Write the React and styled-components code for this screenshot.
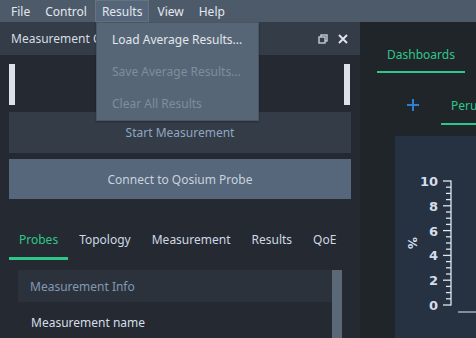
import React from 'react'
import styled, { createGlobalStyle } from 'styled-components'

const Global = createGlobalStyle`
  html, body { margin: 0; padding: 0; background: #202529; }
  body { font-family: "Noto Sans", "Open Sans", sans-serif; font-size: 12px; }
`

const Window = styled.div`
  position: relative;
  width: 476px;
  height: 338px;
  overflow: hidden;
  display: flex;
  flex-direction: column;
  background: #202529;
`

const MenuBar = styled.div`
  height: 22px;
  flex: none;
  display: flex;
  align-items: center;
  padding-left: 4px;
  background: #4d5a69;
`

const MenuItem = styled.div`
  height: 22px;
  box-sizing: border-box;
  padding: 0 6px;
  margin-right: 1px;
  display: flex;
  align-items: center;
  color: #e3e8ee;
  border: 1px solid ${(p) => (p.open ? '#65737f' : 'transparent')};
  background: ${(p) => (p.open ? '#56667a' : 'transparent')};
`

const Main = styled.div`
  flex: 1;
  display: flex;
  min-height: 0;
`

const Dock = styled.div`
  width: 360px;
  flex: none;
  display: flex;
  flex-direction: column;
  background: #252a32;
`

const DockTitle = styled.div`
  height: 33px;
  flex: none;
  display: flex;
  align-items: center;
  padding: 0 12px 0 11px;
  background: #333c47;
  color: #d6dde6;
`

const TitleText = styled.span`
  flex: 1;
`

const TitleButtons = styled.div`
  display: flex;
  align-items: center;
  gap: 10px;
`

const DockBody = styled.div`
  flex: 1;
  display: flex;
  flex-direction: column;
  padding: 9px 9px 0 9px;
`

const EdgeRow = styled.div`
  height: 41px;
  display: flex;
  justify-content: space-between;
  padding-right: 1px;
`

const Edge = styled.div`
  width: 6px;
  background: #dde1e8;
`

const Button = styled.div`
  height: ${(p) => (p.primary ? 40 : 41)}px;
  margin-top: ${(p) => (p.primary ? 6 : 7)}px;
  display: flex;
  align-items: center;
  justify-content: center;
  background: ${(p) => (p.primary ? '#56667b' : '#343d47')};
  color: ${(p) => (p.primary ? '#c9d3de' : '#8fa6c2')};
`

const Tabs = styled.div`
  margin-top: 23px;
  display: flex;
  height: 38px;
`

const Tab = styled.div`
  padding: 0 10px;
  margin-right: 1px;
  display: flex;
  align-items: center;
  color: ${(p) => (p.active ? '#2fc789' : '#cfd8e3')};
  border-bottom: 3px solid ${(p) => (p.active ? '#2fc789' : 'transparent')};
`

const Content = styled.div`
  margin-top: 10px;
  margin-left: 9px;
  display: flex;
  flex: 1;
  width: 324px;
`

const Group = styled.div`
  flex: 1;
`

const GroupHeader = styled.div`
  height: 32px;
  display: flex;
  align-items: center;
  padding-left: 12px;
  background: #2c323c;
  color: #8198b3;
`

const Field = styled.div`
  padding: 12px 0 0 13px;
  color: #d5dde7;
`

const Scroll = styled.div`
  width: 10px;
  background: #5a6878;
`

const Right = styled.div`
  flex: 1;
  display: flex;
  flex-direction: column;
  background: #202529;
`

const TopTabs = styled.div`
  display: flex;
  padding: 15px 0 0 17px;
`

const TopTab = styled.div`
  width: 88px;
  height: 36px;
  box-sizing: border-box;
  display: flex;
  align-items: center;
  justify-content: center;
  color: #2fc789;
  border-bottom: 2px solid #2fc789;
`

const SubTabs = styled.div`
  display: flex;
  align-items: center;
  margin-top: 14px;
  height: 38px;
`

const Plus = styled.div`
  width: 81px;
  box-sizing: border-box;
  padding: 0 0 3px 47px;
  display: flex;
`

const SubTab = styled.div`
  flex: 1;
  height: 38px;
  box-sizing: border-box;
  padding: 0 0 0 10px;
  display: flex;
  align-items: center;
  color: #2fc789;
  border-bottom: 2px solid #2fc789;
  white-space: nowrap;
  overflow: hidden;
`

const ChartArea = styled.div`
  flex: 1;
  margin: 11px 0 0 35px;
  background: #263142;
`

const Dropdown = styled.div`
  position: absolute;
  left: 96px;
  top: 22px;
  width: 163px;
  height: 99px;
  box-sizing: border-box;
  background: #576676;
  border: 1px solid #4a5666;
  box-shadow: 0 1px 2px rgba(0, 0, 0, 0.3);
  display: flex;
  flex-direction: column;
`

const DropItem = styled.div`
  height: 33px;
  display: flex;
  align-items: center;
  padding-left: 15px;
  color: ${(p) => (p.disabled ? '#7f8d9c' : '#e1e7ee')};
`

const FloatIcon = () => (
  <svg width="10" height="10" viewBox="0 0 10 10">
    <rect x="3" y="1" width="6" height="6" fill="none" stroke="#c5ccd5" strokeWidth="1.4" />
    <rect x="1" y="3" width="6" height="6" fill="#333c47" stroke="#c5ccd5" strokeWidth="1.4" />
  </svg>
)

const CloseIcon = () => (
  <svg width="10" height="10" viewBox="0 0 10 10">
    <path d="M1 1 L9 9 M9 1 L1 9" stroke="#dfe4ea" strokeWidth="2" />
  </svg>
)

const PlusIcon = () => (
  <svg width="12" height="12" viewBox="0 0 12 12">
    <path d="M6 0 V12 M0 6 H12" stroke="#2f7fd0" strokeWidth="2" />
  </svg>
)

const Chart = () => {
  const ticks = []
  for (let i = 0; i <= 20; i++) {
    const y = 45 + i * 6.2
    const major = i % 4 === 0
    ticks.push(
      <line key={i} x1={major ? 48 : 51} x2={56} y1={y} y2={y} stroke="#dfe6ef" strokeWidth="1.3" />
    )
  }
  const labels = [10, 8, 6, 4, 2, 0]
  return (
    <svg width="81" height="202" viewBox="0 0 81 202">
      <line x1="56" x2="56" y1="44.5" y2="169.5" stroke="#dfe6ef" strokeWidth="1.3" />
      {ticks}
      {labels.map((v, i) => (
        <text
          key={v}
          x="43"
          y={50 + i * 24.8}
          textAnchor="end"
          fill="#d3deea"
          fontSize="13"
          fontWeight="bold"
          fontFamily="DejaVu Sans, sans-serif"
        >
          {v}
        </text>
      ))}
      <text
        x="0"
        y="0"
        transform="translate(13 107) rotate(90)"
        textAnchor="middle"
        fill="#d3deea"
        fontSize="12"
        fontWeight="bold"
        fontFamily="DejaVu Sans, sans-serif"
      >
        %
      </text>
      <line x1="63" x2="81" y1="176" y2="176" stroke="#dfe6ef" strokeWidth="1" />
    </svg>
  )
}

export default function App() {
  return (
    <Window>
      <Global />
      <MenuBar>
        <MenuItem>File</MenuItem>
        <MenuItem>Control</MenuItem>
        <MenuItem open>Results</MenuItem>
        <MenuItem>View</MenuItem>
        <MenuItem>Help</MenuItem>
      </MenuBar>
      <Main>
        <Dock>
          <DockTitle>
            <TitleText>Measurement Control</TitleText>
            <TitleButtons>
              <FloatIcon />
              <CloseIcon />
            </TitleButtons>
          </DockTitle>
          <DockBody>
            <EdgeRow>
              <Edge />
              <Edge />
            </EdgeRow>
            <Button>Start Measurement</Button>
            <Button primary>Connect to Qosium Probe</Button>
            <Tabs>
              <Tab active>Probes</Tab>
              <Tab>Topology</Tab>
              <Tab>Measurement</Tab>
              <Tab>Results</Tab>
              <Tab>QoE</Tab>
            </Tabs>
            <Content>
              <Group>
                <GroupHeader>Measurement Info</GroupHeader>
                <Field>Measurement name</Field>
              </Group>
              <Scroll />
            </Content>
          </DockBody>
        </Dock>
        <Right>
          <TopTabs>
            <TopTab>Dashboards</TopTab>
          </TopTabs>
          <SubTabs>
            <Plus>
              <PlusIcon />
            </Plus>
            <SubTab>Peru</SubTab>
          </SubTabs>
          <ChartArea>
            <Chart />
          </ChartArea>
        </Right>
      </Main>
      <Dropdown>
        <DropItem>Load Average Results...</DropItem>
        <DropItem disabled>Save Average Results...</DropItem>
        <DropItem disabled>Clear All Results</DropItem>
      </Dropdown>
    </Window>
  )
}
